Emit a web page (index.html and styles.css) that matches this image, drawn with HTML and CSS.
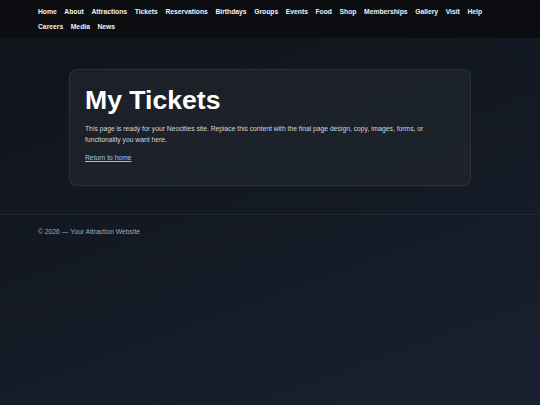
FILE: index.html
```html
<!DOCTYPE html>
<html lang="en">
<head>
    <meta charset="UTF-8">
    <meta name="viewport" content="width=device-width, initial-scale=1.0">
    <title>My Tickets</title>
    <link rel="stylesheet" href="styles.css">
</head>
<body>
    <header class="site-header">
        <nav class="main-nav">
            <a href="#">Home</a>
            <a href="#">About</a>
            <a href="#">Attractions</a>
            <a href="#">Tickets</a>
            <a href="#">Reservations</a>
            <a href="#">Birthdays</a>
            <a href="#">Groups</a>
            <a href="#">Events</a>
            <a href="#">Food</a>
            <a href="#">Shop</a>
            <a href="#">Memberships</a>
            <a href="#">Gallery</a>
            <a href="#">Visit</a>
            <a href="#">Help</a>
            <a href="#">Careers</a>
            <a href="#">Media</a>
            <a href="#">News</a>
        </nav>
    </header>

    <main class="content">
        <section class="panel">
            <h1>My Tickets</h1>
            <p>This page is ready for your Neocities site. Replace this content with the final page design, copy, images, forms, or functionality you want here.</p>
            <p class="back"><a href="#">Return to home</a></p>
        </section>
    </main>

    <footer class="site-footer">
        <p>&copy; 2026 &mdash; Your Attraction Website</p>
    </footer>
</body>
</html>
```

FILE: styles.css
```css
html {
    min-height: 100%;
    background: linear-gradient(160deg, #0f131a 0%, #141a24 55%, #182030 100%);
}
body {
    margin: 0;
    min-height: 405px;
    font-family: "Liberation Sans", Arial, sans-serif;
    font-size: 6.75px;
    color: #e6e8ec;
}
.site-header {
    background: #0b0d11;
    height: 38px;
    box-sizing: border-box;
    padding: 4px 38px 0;
}
.main-nav {
    display: flex;
    flex-wrap: wrap;
    column-gap: 7.6px;
    line-height: 15px;
}
.main-nav a {
    color: #f2f3f5;
    font-weight: bold;
    text-decoration: none;
}
.content {
    padding-top: 31px;
}
.panel {
    width: 402px;
    box-sizing: border-box;
    margin: 0 auto;
    padding: 15px 15px 22px;
    background: rgba(32, 37, 46, 0.75);
    border: 1px solid rgba(255, 255, 255, 0.07);
    border-radius: 8px;
}
.panel h1 {
    margin: 0;
    font-size: 26.6px;
    line-height: 1.2;
    color: #ffffff;
}
.panel p {
    margin: 6px 0 0;
    line-height: 11px;
    color: #d3d6db;
}
.panel .back {
    margin-top: 7px;
}
.panel a {
    color: #9cc3ee;
}
.site-footer {
    margin-top: 28px;
    border-top: 1px solid rgba(255, 255, 255, 0.06);
    padding: 11px 38px;
}
.site-footer p {
    margin: 0;
    line-height: 11px;
    color: #a3a8b0;
}
```
